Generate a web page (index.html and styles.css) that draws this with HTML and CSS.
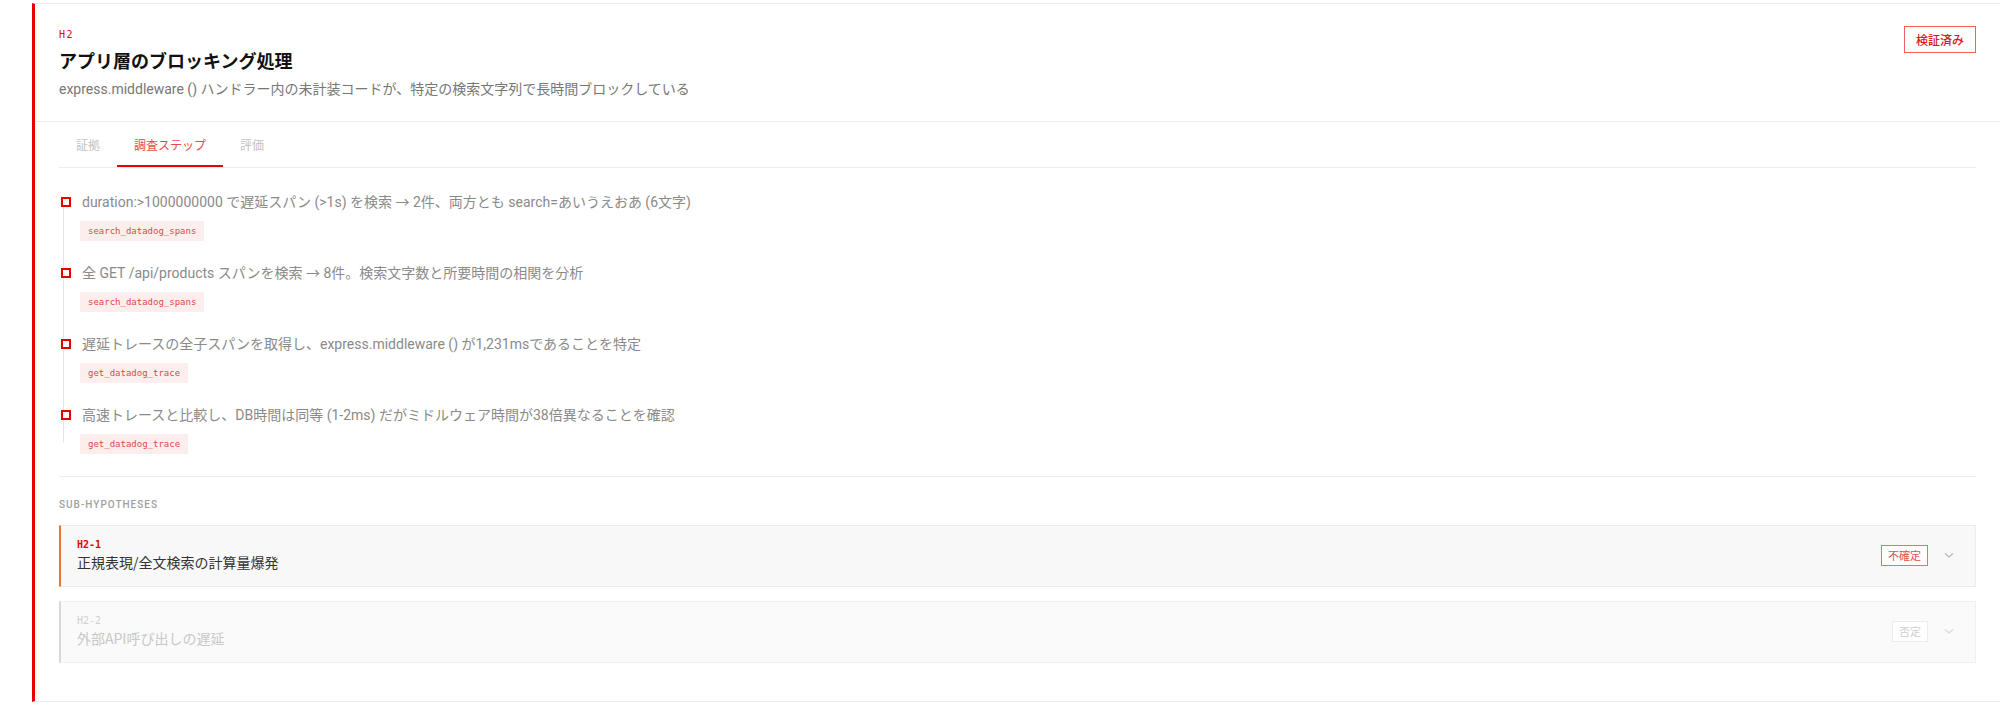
FILE: index.html
```html
<!DOCTYPE html>
<html lang="ja">
<head>
<meta charset="utf-8">
<title>H2</title>
<link rel="stylesheet" href="styles.css">
</head>
<body>
<div class="page">
  <article class="card">
    <header class="hdr">
      <div class="hdr-main">
        <div class="hid">H2</div>
        <h1 class="title">アプリ層のブロッキング処理</h1>
        <p class="desc">express.middleware () ハンドラー内の未計装コードが、特定の検索文字列で長時間ブロックしている</p>
      </div>
      <span class="badge">検証済み</span>
    </header>
    <div class="body">
      <nav class="tabs">
        <span class="tab">証拠</span>
        <span class="tab active">調査ステップ</span>
        <span class="tab">評価</span>
      </nav>
      <ol class="steps">
        <li class="step">
          <div class="mark-col"><span class="mark"></span><span class="line"></span></div>
          <div class="step-body">
            <div class="step-text">duration:&gt;1000000000 で遅延スパン (&gt;1s) を検索 → 2件、両方とも search=あいうえおあ (6文字)</div>
            <span class="tag">search_datadog_spans</span>
          </div>
        </li>
        <li class="step">
          <div class="mark-col"><span class="mark"></span><span class="line"></span></div>
          <div class="step-body">
            <div class="step-text">全 GET /api/products スパンを検索 → 8件。検索文字数と所要時間の相関を分析</div>
            <span class="tag">search_datadog_spans</span>
          </div>
        </li>
        <li class="step">
          <div class="mark-col"><span class="mark"></span><span class="line"></span></div>
          <div class="step-body">
            <div class="step-text">遅延トレースの全子スパンを取得し、express.middleware () が1,231msであることを特定</div>
            <span class="tag">get_datadog_trace</span>
          </div>
        </li>
        <li class="step">
          <div class="mark-col"><span class="mark"></span><span class="line"></span></div>
          <div class="step-body">
            <div class="step-text">高速トレースと比較し、DB時間は同等 (1-2ms) だがミドルウェア時間が38倍異なることを確認</div>
            <span class="tag">get_datadog_trace</span>
          </div>
        </li>
      </ol>
      <section class="subs">
        <div class="subs-label">SUB-HYPOTHESES</div>
        <div class="sub sub-open">
          <div class="sub-main">
            <div class="sub-id">H2-1</div>
            <div class="sub-title">正規表現/全文検索の計算量爆発</div>
          </div>
          <span class="sub-badge">不確定</span>
          <svg class="chev" width="12" height="12" viewBox="0 0 12 12"><path d="M2 4.5 L6 8 L10 4.5" fill="none" stroke="#b8b8b8" stroke-width="1.2"/></svg>
        </div>
        <div class="sub sub-rejected">
          <div class="sub-main">
            <div class="sub-id">H2-2</div>
            <div class="sub-title">外部API呼び出しの遅延</div>
          </div>
          <span class="sub-badge">否定</span>
          <svg class="chev" width="12" height="12" viewBox="0 0 12 12"><path d="M2 4.5 L6 8 L10 4.5" fill="none" stroke="#b8b8b8" stroke-width="1.2"/></svg>
        </div>
      </section>
    </div>
  </article>
</div>
</body>
</html>
```

FILE: styles.css
```css
* { box-sizing: border-box; }
html, body { margin: 0; padding: 0; background: #fff; }
body {
  font-family: "Roboto", "Noto Sans CJK JP", sans-serif;
  color: #222;
}
.page { padding: 3px 0 0 32px; }

.card {
  background: #fff;
  border-top: 1px solid #ececec;
  border-bottom: 1px solid #ececec;
  border-left: 3px solid #e60000;
}

.hdr {
  display: flex;
  justify-content: space-between;
  align-items: flex-start;
  padding: 24px 24px 22px;
  border-bottom: 1px solid #ececec;
}
.hid {
  font-family: "DejaVu Sans Mono", monospace;
  font-size: 10px;
  line-height: 14px;
  letter-spacing: 1.5px;
  color: #e60000;
  font-weight: 400;
}
.title {
  margin: 5px 0 0;
  font-family: "Noto Sans CJK JP", sans-serif;
  font-size: 18px;
  line-height: 26px;
  font-weight: 700;
  color: #111;
}
.desc {
  margin: 6px 0 0;
  font-size: 14px;
  line-height: 20px;
  color: #777;
}
.badge {
  margin-top: -2px;
  border: 1px solid #f06060;
  color: #d81818;
  font-family: "Noto Sans CJK JP", sans-serif;
  font-size: 12px;
  line-height: 25px;
  padding: 0 11px;
  font-weight: 500;
}

.body { padding: 0 24px; }

.tabs {
  display: flex;
  border-bottom: 1px solid #ececec;
}
.tab {
  font-family: "Noto Sans CJK JP", sans-serif;
  font-size: 12px;
  line-height: 18px;
  padding: 14px 17px 11px;
  border-bottom: 2px solid transparent;
  color: #c2c2c2;
}
.tab.active {
  color: #e84848;
  border-bottom-color: #e60000;
}

.steps {
  list-style: none;
  margin: 0;
  padding: 24px 0 0;
  border-bottom: 1px solid #ececec;
}
.step {
  display: flex;
}
.mark-col {
  width: 23px;
  flex: none;
  display: flex;
  flex-direction: column;
}
.mark-col::before {
  content: "";
  width: 1px;
  height: 5px;
  margin-left: 4px;
  background: #e6e6e6;
}
.step:first-child .mark-col::before { background: transparent; }
.mark {
  width: 10px;
  height: 10px;
  margin-left: 2px;
  border: 2px solid #e60000;
  background: #fff;
}
.line {
  flex: 1;
  width: 1px;
  margin-left: 4px;
  background: #e6e6e6;
}
.step:last-child .line { margin-bottom: 33px; }
.step-body {
  padding-bottom: 22px;
  display: flex;
  flex-direction: column;
  align-items: flex-start;
}
.step-text {
  font-size: 14px;
  line-height: 20px;
  color: #8a8a8a;
}
.tag {
  margin-top: 9px;
  margin-left: -2px;
  font-family: "DejaVu Sans Mono", monospace;
  font-size: 9px;
  line-height: 20px;
  padding: 0 8px;
  background: #fdeeee;
  color: #e04848;
}

.subs { padding: 22px 0 38px; }
.subs-label {
  font-size: 10px;
  line-height: 12px;
  letter-spacing: 1px;
  color: #a0a0a0;
  font-weight: 500;
  margin-bottom: 14px;
}
.sub {
  display: flex;
  align-items: center;
  border: 1px solid #ececec;
  border-left: 2px solid #e8772e;
  background: #f8f8f8;
  padding: 12px 20px 14px 16px;
}
.sub + .sub { margin-top: 14px; }
.sub-main { flex: 1; }
.sub-id {
  font-family: "DejaVu Sans Mono", monospace;
  font-size: 10px;
  line-height: 14px;
  font-weight: 700;
  color: #e60000;
}
.sub-title {
  font-family: "Noto Sans CJK JP", sans-serif;
  font-size: 14px;
  line-height: 20px;
  font-weight: 400;
  color: #333;
}
.sub-badge {
  font-family: "Noto Sans CJK JP", sans-serif;
  font-size: 11px;
  line-height: 19px;
  padding: 0 6px;
  border: 1px solid #f26a6a;
  color: #e05050;
  background: #fff;
}
.chev { margin-left: 15px; display: block; }
.sub-rejected {
  background: #fafafa;
  border-color: #f0f0f0;
  border-left-color: #d8d8d8;
}
.sub-rejected .sub-id { color: #d0d0d0; font-weight: 400; }
.sub-rejected .sub-title { color: #c8c8c8; }
.sub-rejected .sub-badge { border-color: #ececec; color: #d0d0d0; }
.sub-rejected .chev path { stroke: #d8d8d8; }
```
